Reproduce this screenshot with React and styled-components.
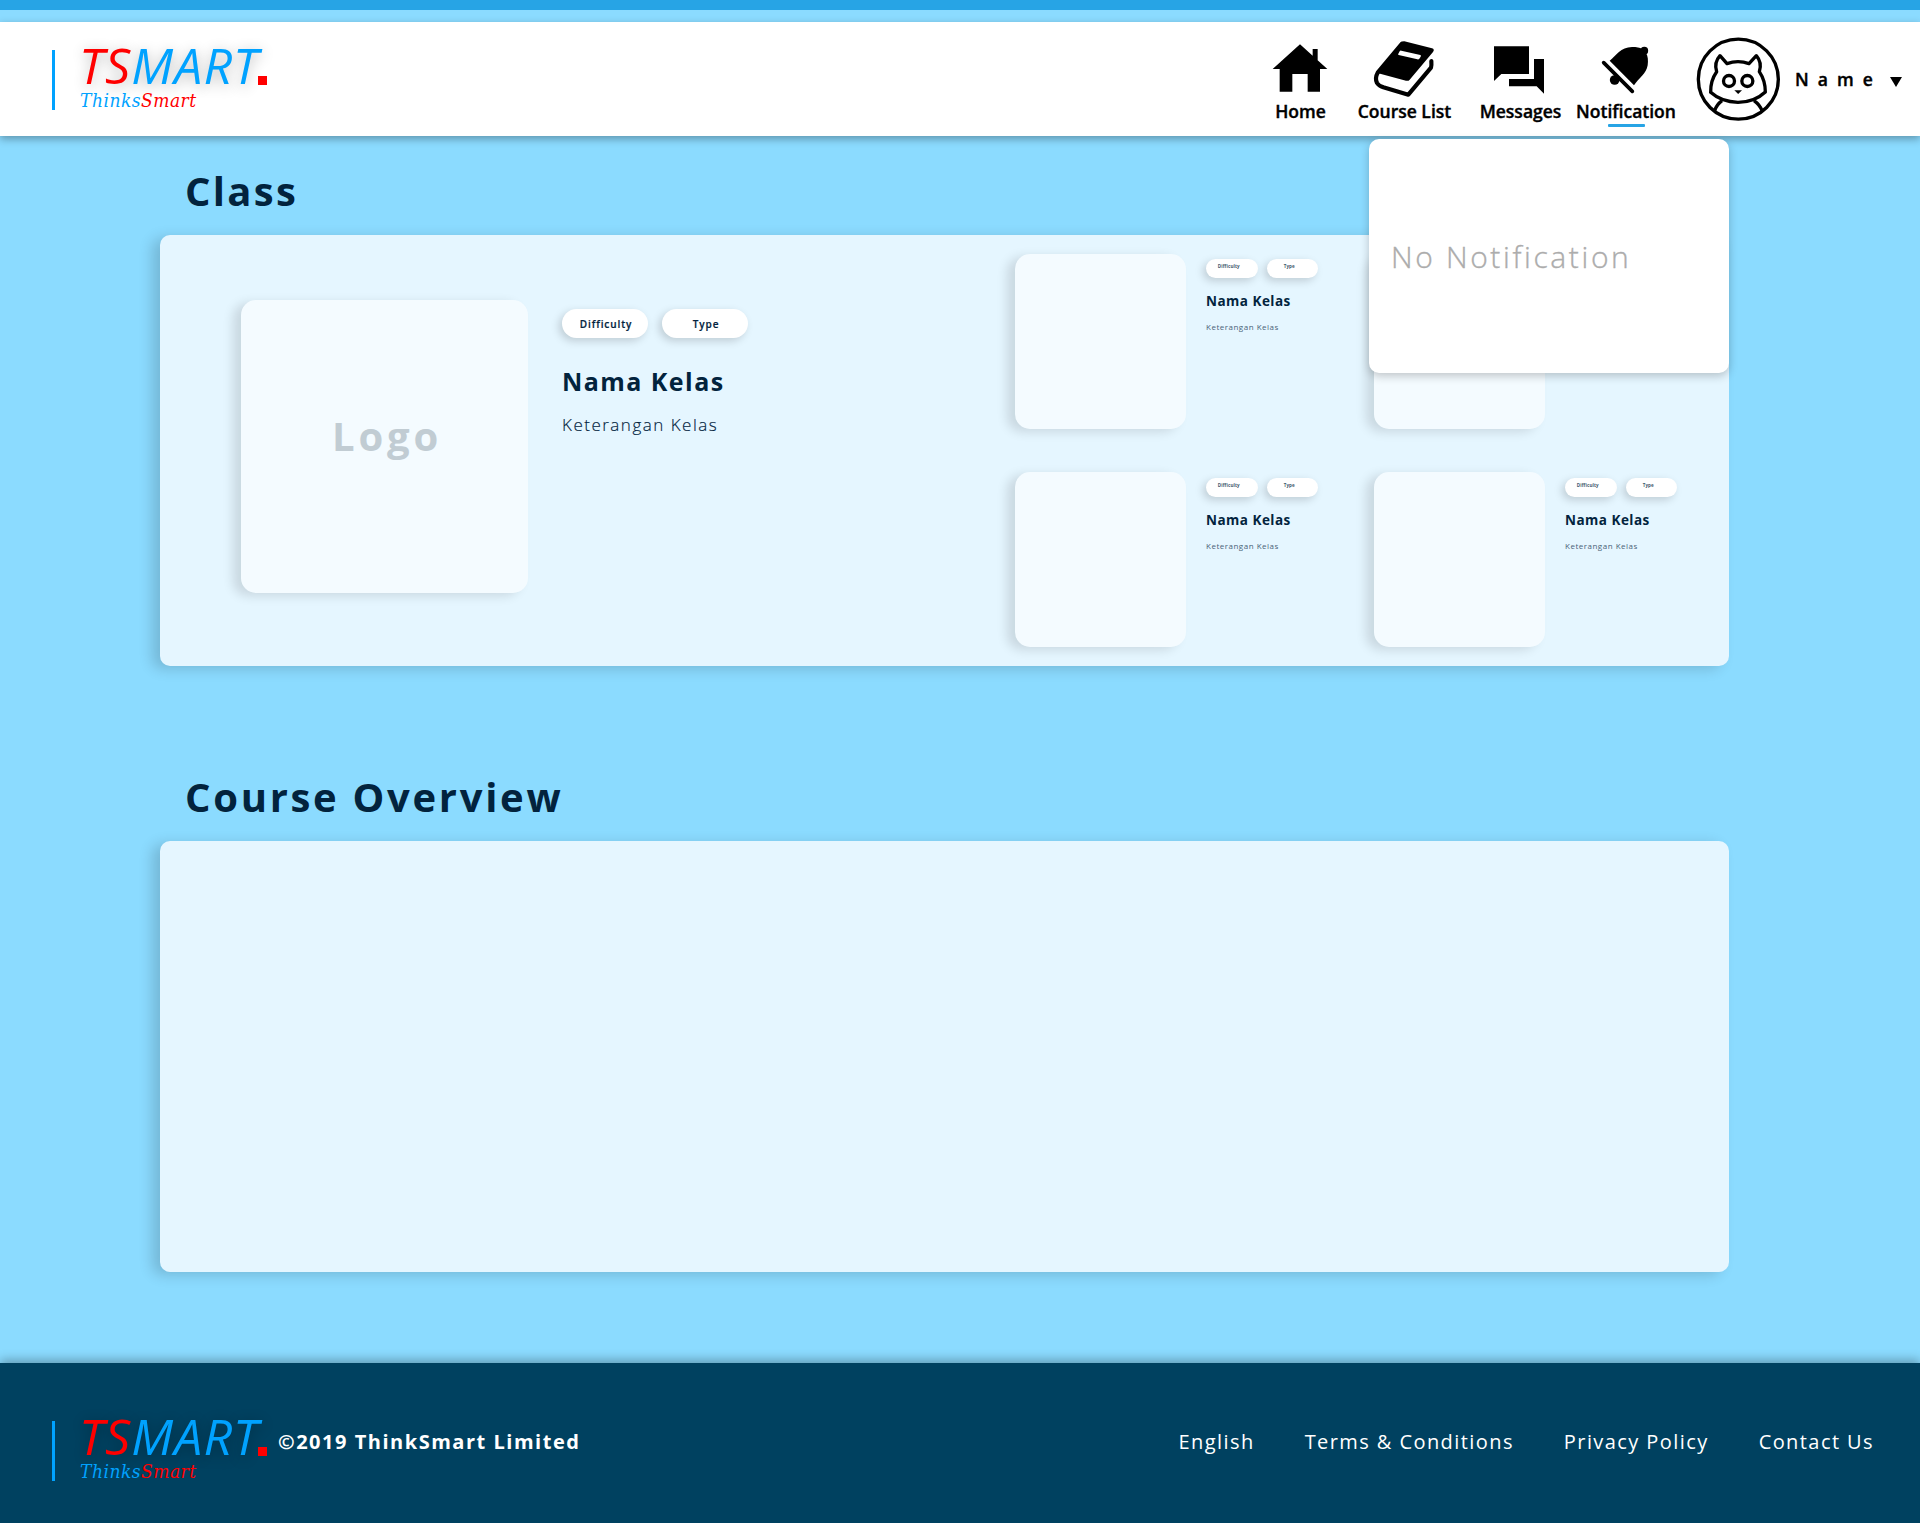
import React from "react";
import styled, { createGlobalStyle } from "styled-components";

const GlobalStyle = createGlobalStyle`
  *, *::before, *::after { box-sizing: border-box; }
  body {
    margin: 0;
    background: #8bdbff;
    font-family: "Open Sans", "Noto Sans", sans-serif;
    color: #02233d;
  }
`;

const Page = styled.div`
  width: 1920px;
  height: 1523px;
  display: flex;
  flex-direction: column;
  overflow: hidden;
`;

const TopStripe = styled.div`
  flex: none;
  height: 10px;
  margin-bottom: 12px;
  background: #27a4e5;
`;

const Header = styled.header`
  position: relative;
  z-index: 2;
  flex: none;
  height: 114px;
  display: flex;
  align-items: flex-start;
  justify-content: space-between;
  padding: 0 18px 0 52px;
  background: #fff;
  box-shadow: 0 3px 8px rgba(0, 0, 0, 0.32);
`;

/* ---------- brand ---------- */

const Brand = styled.div`
  display: flex;
  align-items: flex-start;
  margin-top: ${(p) => p.$top}px;
`;

const BrandBar = styled.div`
  width: 3px;
  height: 60px;
  margin: 8.5px 24px 0 0;
  background: #00a2ff;
`;

const WordRow = styled.div`
  display: flex;
  align-items: flex-end;
`;

const Word = styled.div`
  width: 179px;
  font-size: 50px;
  font-style: italic;
  line-height: 49px;
  letter-spacing: 1.1px;
  white-space: nowrap;
  color: #00a2ff;
  text-shadow: 0 3px 14px rgba(0, 0, 0, 0.3);
`;

const WordDot = styled.div`
  width: 9px;
  height: 9px;
  margin: 0 0 5px;
  background: #f00;
`;

const Tagline = styled.div`
  font-family: "DejaVu Serif Condensed", "DejaVu Serif", serif;
  font-stretch: condensed;
  font-size: 19px;
  font-style: italic;
  line-height: 20px;
  letter-spacing: 0.5px;
  margin-left: 1px;
  white-space: nowrap;
  color: #00a2ff;
`;

const Red = styled.span`
  color: #f00;
`;

function Logo({ top }) {
  return (
    <Brand $top={top}>
      <BrandBar />
      <div>
        <WordRow>
          <Word>
            <Red>TS</Red>MART
          </Word>
          <WordDot />
        </WordRow>
        <Tagline>
          Thinks<Red>Smart</Red>
        </Tagline>
      </div>
    </Brand>
  );
}

/* ---------- navigation ---------- */

const Nav = styled.nav`
  display: flex;
  align-items: flex-start;
  padding-top: 15px;
  color: #000;
`;

const NavItem = styled.div`
  width: ${(p) => p.$width}px;
  display: flex;
  flex-direction: column;
  align-items: center;
`;

const NavIcon = styled.svg`
  display: block;
  width: 100%;
  height: 62px;
`;

const NavLabel = styled.span`
  margin-left: 1px;
  font-size: 17.5px;
  font-weight: 600;
  line-height: 24px;
  white-space: nowrap;
  -webkit-text-stroke: 0.4px #000;
`;

const ActiveBar = styled.div`
  width: 37px;
  height: 3px;
  margin: 1px 0 0 1px;
  border-radius: 1px;
  background: #27a4e5;
`;

const Avatar = styled.svg`
  display: block;
  width: 84px;
  height: 84px;
  margin-left: 21px;
`;

const UserName = styled.span`
  width: 95px;
  margin: 29px 0 0 15px;
  font-size: 17.5px;
  font-weight: 600;
  line-height: 26px;
  letter-spacing: 9.1px;
  white-space: nowrap;
  -webkit-text-stroke: 0.4px #000;
`;

const Caret = styled.svg`
  display: block;
  width: 12px;
  height: 10px;
  margin-top: 40px;
`;

const HomeIcon = () => (
  <NavIcon viewBox="48 111 264 186">
    <path d="M180 133 L218 167 V147 H233 V181 L262 207 H240 V275 H203 V222 H157 V275 H119 V207 H98 Z" />
  </NavIcon>
);

const BookIcon = () => (
  <NavIcon viewBox="312 111 360 186">
    <path d="M482 129 Q486 123 493 124 L576 145 Q585 148 579 156 L509 239 Q505 244 498 242 L412 219 Z" />
    <path
      d="M486 131 L413 218 Q404 234 411 249 Q416 257 430 262 L505 284 L573 203 Q575 197 574 183"
      fill="none"
      stroke="#000"
      strokeWidth="12.5"
      strokeLinecap="round"
      strokeLinejoin="round"
    />
    <path d="M484 152 L541 165 Q544 166 542 170 L538 176 Q536 179 532 178 L476 165 Q473 164 475 161 L479 154 Q481 151 484 152 Z" fill="#fff" />
  </NavIcon>
);

const MessagesIcon = () => (
  <NavIcon viewBox="672 111 336 186">
    <path d="M762 139 H867 V222 H784 L762 243 Z" />
    <path d="M882 177 H912 V281 L890 259 H807 V237 H882 Z" />
  </NavIcon>
);

const BellIcon = () => (
  <NavIcon viewBox="48 111 297 186">
    <path d="M149 182 C168 168 182 141 216 141 C230 141 240 143 246 147 L258 159 C264 168 265 182 263 196 C259 222 236 234 222 256 Z" />
    <circle cx="253" cy="152" r="11.5" />
    <circle cx="164" cy="240" r="14.5" />
    <path d="M131 188 L217 274" stroke="#000" strokeWidth="11" strokeLinecap="round" />
  </NavIcon>
);

const CatAvatar = () => (
  <Avatar viewBox="48 21 252 252" fill="none" stroke="#000" strokeWidth="10" strokeLinejoin="round">
    <circle cx="175" cy="147.5" r="120" />
    <path d="M141 101 Q174 89 207 101 L229 77 Q247 98 238 125 Q256 152 256 186 Q223 217 174 217 Q124 216 92 187 Q91 152 110 125 Q101 98 120 77 Z" />
    <circle cx="147" cy="153" r="16.5" />
    <circle cx="202" cy="153" r="16.5" />
    <path d="M163 181 H186 L174.500 192 Z" fill="#000" stroke="none" />
    <path d="M126 212 Q110 224 104 242 M222 212 Q239 224 246 242" />
  </Avatar>
);

/* ---------- notification popup ---------- */

const Popup = styled.div`
  position: absolute;
  top: 117px;
  left: 1369px;
  width: 360px;
  height: 234px;
  display: flex;
  align-items: center;
  padding: 2px 0 0 22px;
  border-radius: 10px;
  background: #fff;
  box-shadow: 0 3px 10px rgba(0, 0, 0, 0.22);
  font-size: 30px;
  font-weight: 300;
  line-height: 40px;
  letter-spacing: 2.62px;
  white-space: nowrap;
  color: #acacac;
  -webkit-text-stroke: 0.35px #acacac;
`;

/* ---------- content ---------- */

const Main = styled.main`
  flex: 1;
  padding: 0 191px 0 160px;
`;

const Section = styled.section`
  margin-bottom: 76px;
`;

const Heading = styled.h1`
  height: 99px;
  margin: 0;
  padding: 28px 0 0 25px;
  font-size: 40px;
  font-weight: 700;
  line-height: 54px;
  letter-spacing: ${(p) => p.$spacing}px;
`;

const Panel = styled.div`
  height: 431px;
  display: flex;
  border-radius: 10px;
  background: #e5f6ff;
  box-shadow: -8px 3px 14px rgba(0, 0, 0, 0.16);
`;

const Feature = styled.article`
  width: 855px;
  display: flex;
  padding: 65px 0 0 81px;
`;

const Thumb = styled.div`
  flex: none;
  width: 287px;
  height: 293px;
  display: flex;
  align-items: center;
  justify-content: center;
  padding: 0 0 22px 5px;
  border-radius: 15px;
  background: #f4fbff;
  box-shadow: -8px 3px 11px rgba(0, 0, 0, 0.12);
  font-size: 40px;
  font-weight: 700;
  line-height: 48px;
  letter-spacing: 3.8px;
  color: #c1ccd3;
`;

const SmallThumb = styled(Thumb)`
  width: 171px;
  height: 175px;
  padding: 0;
`;

const Info = styled.div`
  margin: 9px 0 0 34px;
`;

const SmallInfo = styled.div`
  margin: ${(p) => (p.$lower ? 6 : 5)}px 0 0 20px;
`;

const Pills = styled.div`
  display: flex;
  gap: 14px;
`;

const SmallPills = styled(Pills)`
  gap: 9px;
`;

const Pill = styled.span`
  width: 86px;
  height: 29px;
  padding: 1px 0 0 2px;
  border-radius: 15px;
  background: #fff;
  box-shadow: -3px 3px 9px rgba(0, 0, 0, 0.17);
  font-size: 10px;
  font-weight: 600;
  line-height: 29px;
  letter-spacing: 0.9px;
  text-align: center;
  -webkit-text-stroke: 0.2px #02233d;
`;

const SmallPill = styled(Pill)`
  width: 51.5px;
  height: 19px;
  padding: 0 6px 0 0;
  font-size: 4.5px;
  font-weight: 700;
  line-height: 14px;
  letter-spacing: 0.12px;
  color: #3f586c;
  -webkit-text-stroke: 0;
`;

const ClassName = styled.h2`
  margin: 26px 0 0;
  font-size: 25px;
  font-weight: 700;
  line-height: 34px;
  letter-spacing: 1.45px;
`;

const SmallClassName = styled(ClassName)`
  margin-top: 13px;
  font-size: 13.5px;
  line-height: 20px;
  letter-spacing: 0.48px;
`;

const ClassNote = styled.p`
  margin: 15px 0 0;
  font-size: 17px;
  font-weight: 300;
  line-height: 24px;
  letter-spacing: 1.5px;
  -webkit-text-stroke: 0.15px #02233d;
`;

const SmallClassNote = styled(ClassNote)`
  margin-top: 9px;
  font-size: 8px;
  font-weight: 400;
  line-height: 14px;
  letter-spacing: 0.5px;
  color: #4b6378;
  -webkit-text-stroke: 0;
`;

const ClassGrid = styled.div`
  display: grid;
  grid-template-columns: 359px 355px;
  grid-auto-rows: 218px;
  padding-top: 19px;
`;

const ClassCard = styled.article`
  display: flex;
`;

/* ---------- footer ---------- */

const Footer = styled.footer`
  flex: none;
  height: 160px;
  display: flex;
  align-items: flex-start;
  padding: 0 46px 0 52px;
  background: #004160;
  box-shadow: 0 -3px 10px rgba(0, 0, 0, 0.3);
  color: #fff;
`;

const Copyright = styled.span`
  margin: 65px 0 0 11px;
  font-size: 20px;
  font-weight: 700;
  line-height: 28px;
  letter-spacing: 1.52px;
`;

const FooterLinks = styled.div`
  display: flex;
  gap: 50px;
  margin: 65px 0 0 auto;
  font-size: 20px;
  line-height: 28px;
  letter-spacing: 1.42px;
  white-space: nowrap;
`;

const classes = [1, 2, 3, 4];
const links = ["English", "Terms & Conditions", "Privacy Policy", "Contact Us"];

export default function App() {
  return (
    <Page>
      <GlobalStyle />
      <TopStripe />
      <Header>
        <Logo top={19} />
        <Nav>
          <NavItem $width={88}>
            <HomeIcon />
            <NavLabel>Home</NavLabel>
          </NavItem>
          <NavItem $width={120}>
            <BookIcon />
            <NavLabel>Course List</NavLabel>
          </NavItem>
          <NavItem $width={112}>
            <MessagesIcon />
            <NavLabel>Messages</NavLabel>
          </NavItem>
          <NavItem $width={99}>
            <BellIcon />
            <NavLabel>Notification</NavLabel>
            <ActiveBar />
          </NavItem>
          <CatAvatar />
          <UserName>Name</UserName>
          <Caret viewBox="0 0 12 10">
            <path d="M0 0 H12 L6 10 Z" />
          </Caret>
        </Nav>
        <Popup>No Notification</Popup>
      </Header>

      <Main>
        <Section>
          <Heading $spacing={2.3}>Class</Heading>
          <Panel>
            <Feature>
              <Thumb>Logo</Thumb>
              <Info>
                <Pills>
                  <Pill>Difficulty</Pill>
                  <Pill>Type</Pill>
                </Pills>
                <ClassName>Nama Kelas</ClassName>
                <ClassNote>Keterangan Kelas</ClassNote>
              </Info>
            </Feature>
            <ClassGrid>
              {classes.map((id) => (
                <ClassCard key={id}>
                  <SmallThumb />
                  <SmallInfo $lower={id > 2}>
                    <SmallPills>
                      <SmallPill>Difficulty</SmallPill>
                      <SmallPill>Type</SmallPill>
                    </SmallPills>
                    <SmallClassName>Nama Kelas</SmallClassName>
                    <SmallClassNote>Keterangan Kelas</SmallClassNote>
                  </SmallInfo>
                </ClassCard>
              ))}
            </ClassGrid>
          </Panel>
        </Section>
        <Section>
          <Heading $spacing={2.7}>Course Overview</Heading>
          <Panel />
        </Section>
      </Main>

      <Footer>
        <Logo top={49} />
        <Copyright>©2019 ThinkSmart Limited</Copyright>
        <FooterLinks>
          {links.map((label) => (
            <span key={label}>{label}</span>
          ))}
        </FooterLinks>
      </Footer>
    </Page>
  );
}
